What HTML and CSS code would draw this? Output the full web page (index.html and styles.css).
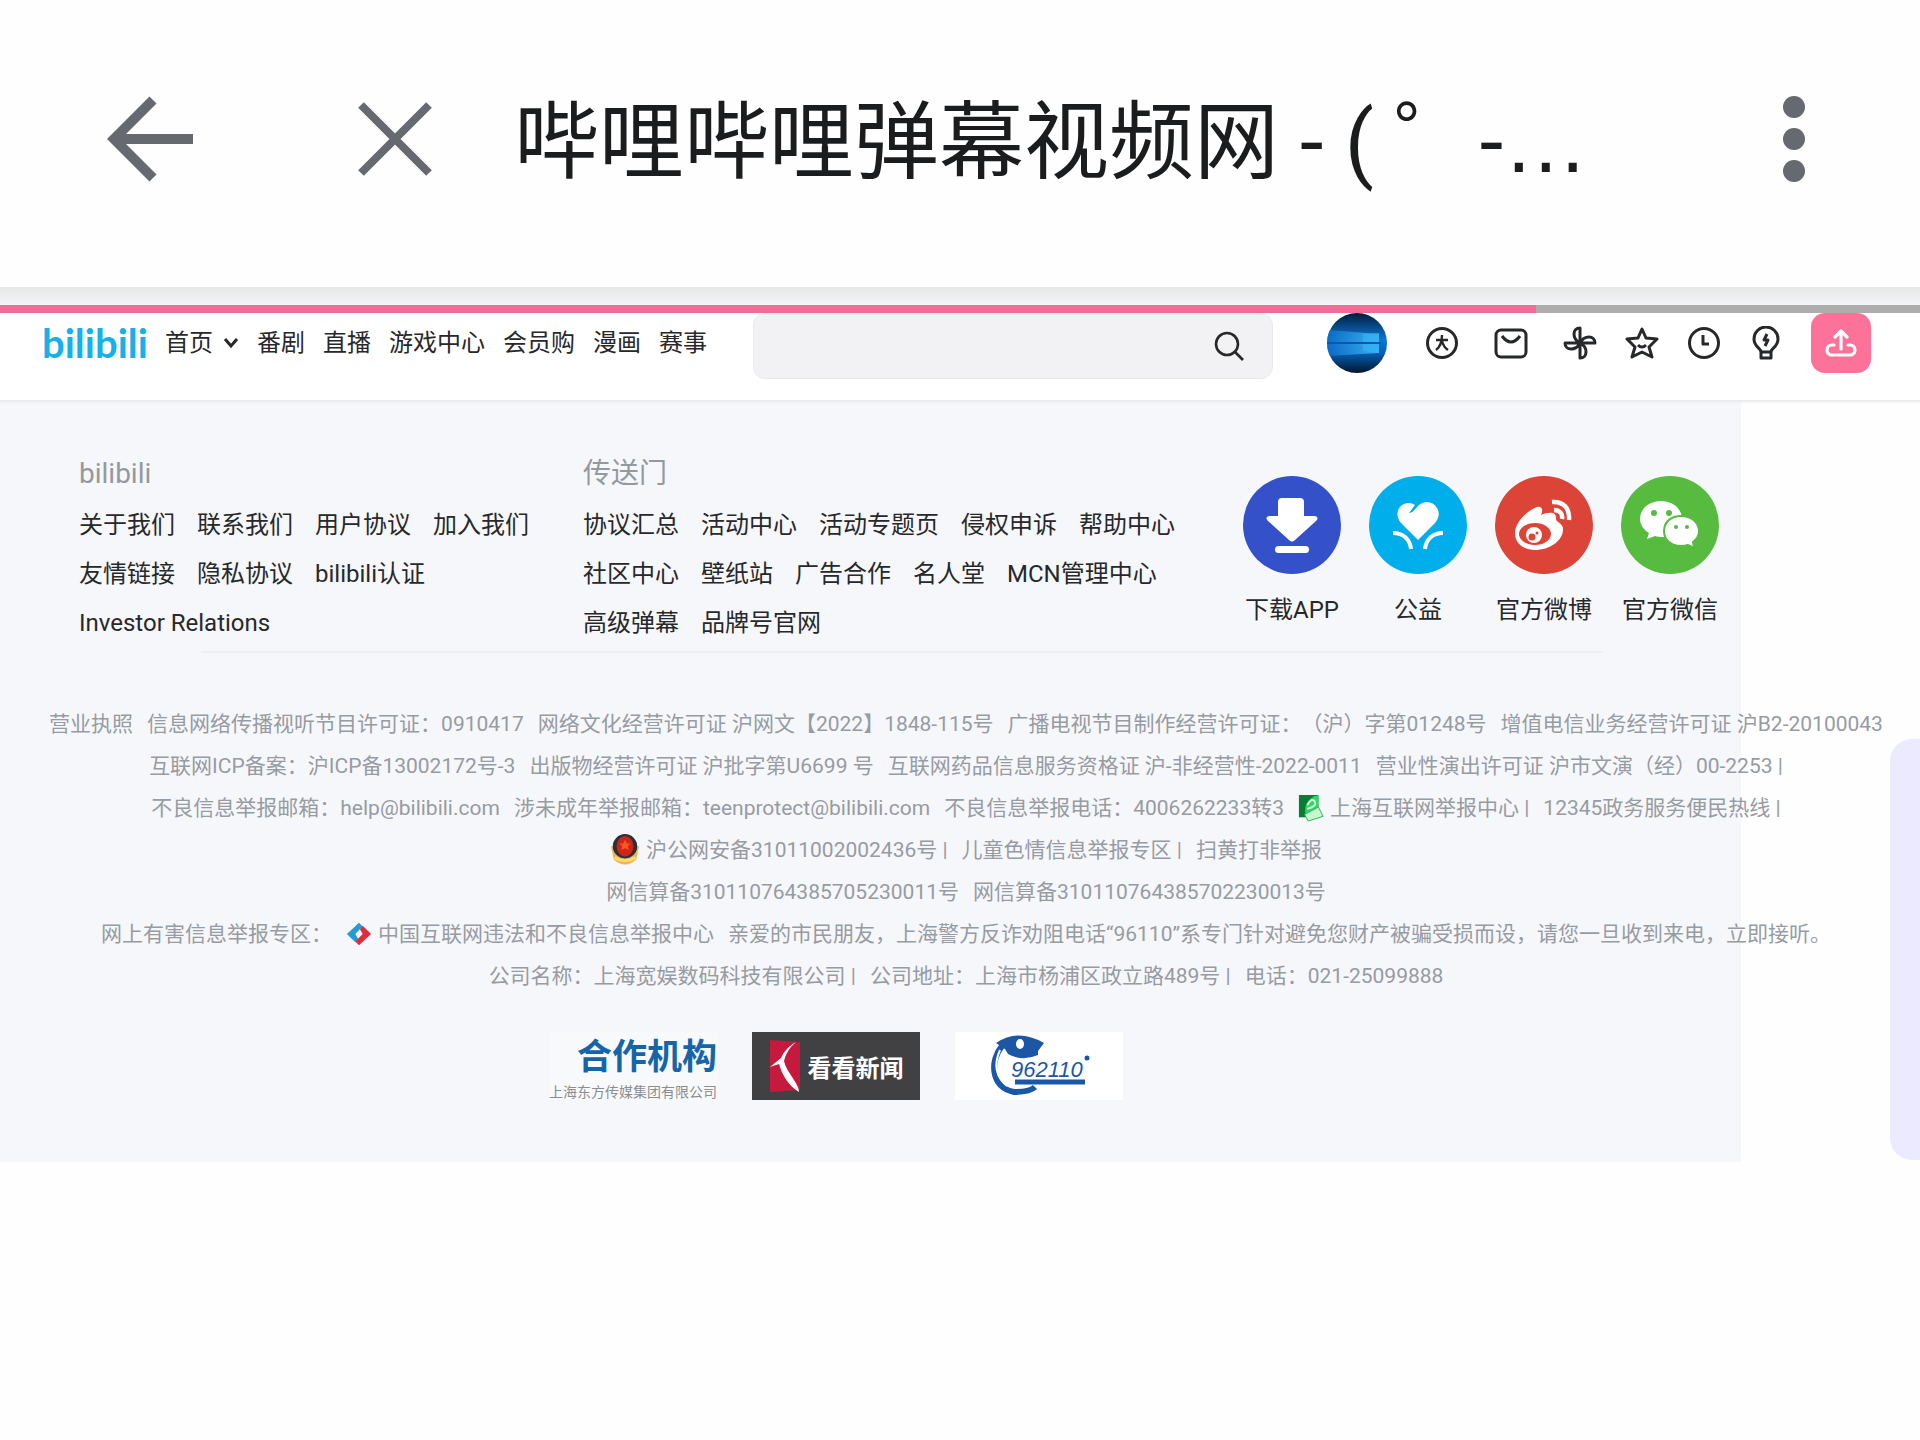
FILE: index.html
```html
<!DOCTYPE html>
<html lang="zh-CN">
<head>
  <meta charset="UTF-8" />
  <meta name="viewport" content="width=device-width, initial-scale=1.0"/>
  <title>哔哩哔哩弹幕视频网</title>
  <link rel="stylesheet" href="styles.css">
</head>
<body>

  <header class="app-bar">
    <button class="icon-btn back" aria-label="返回">
      <svg width="86" height="86" viewBox="0 0 86 86" fill="none" stroke="currentColor" stroke-width="10"><path d="M86 43H8M46 4L7 43l39 39"/></svg>
    </button>
    <button class="icon-btn close" aria-label="关闭">
      <svg width="76" height="76" viewBox="0 0 76 76" fill="none" stroke="currentColor" stroke-width="8"><path d="M4 4l68 68M72 4L4 72"/></svg>
    </button>
    <h1>哔哩哔哩弹幕视频网 - ( ゜-<span class="dots">…</span></h1>
    <button class="icon-btn more" aria-label="更多">
      <svg width="24" height="88" viewBox="0 0 24 88" fill="currentColor"><circle cx="12" cy="12" r="11"/><circle cx="12" cy="44" r="11"/><circle cx="12" cy="76" r="11"/></svg>
    </button>
  </header>
  <div class="bar-shadow"></div>
  <div class="loading"><div class="loaded"></div></div>

  <nav class="site-nav">
    <a class="logo" href="#">bilibili</a>
    <div class="nav-links">
      <a class="home" href="#">首页
        <svg width="16" height="12" viewBox="0 0 16 12" fill="none" stroke="currentColor" stroke-width="3"><path d="M2 2l6 7 6-7"/></svg>
      </a>
      <a href="#">番剧</a>
      <a href="#">直播</a>
      <a href="#">游戏中心</a>
      <a href="#">会员购</a>
      <a href="#">漫画</a>
      <a href="#">赛事</a>
    </div>
    <form class="search">
      <input type="text" aria-label="搜索">
      <button type="button" aria-label="搜索">
        <svg width="30" height="30" viewBox="0 0 30 30" fill="none" stroke="currentColor" stroke-width="2.6"><circle cx="13" cy="13" r="11"/><path d="M21 21l8 8"/></svg>
      </button>
    </form>
    <div class="user-links">
      <a class="avatar" href="#" aria-label="头像">
        <svg width="60" height="60" viewBox="0 0 60 60">
          <defs>
            <clipPath id="round"><circle cx="30" cy="30" r="30"/></clipPath>
            <linearGradient id="night" x1="0" y1="0" x2="0" y2="1"><stop offset="0" stop-color="#041b3c"/><stop offset=".45" stop-color="#0a78d4"/><stop offset=".65" stop-color="#0762b8"/><stop offset="1" stop-color="#03142f"/></linearGradient>
            <linearGradient id="beam"><stop offset="0" stop-color="#0a6cc8"/><stop offset="1" stop-color="#48c0fb"/></linearGradient>
          </defs>
          <g clip-path="url(#round)">
            <rect width="60" height="60" fill="url(#night)"/>
            <path d="M0 17l52 4v19L0 43z" fill="url(#beam)" opacity=".8"/>
            <path d="M36 21l16-1v9H36zM36 31h16v9l-16-2z" fill="#35b1f7" opacity=".7"/>
            <path d="M0 30h54" stroke="#075aa8" stroke-width="2"/>
          </g>
        </svg>
      </a>
      <a class="wide" href="#" aria-label="大会员">
        <svg class="line" width="34" height="34" viewBox="0 0 34 34"><circle cx="17" cy="17" r="14.5"/><path d="M11 14h12M17 9c0 7-2 12-6 15M17 15c1 4 3 7 6 9" stroke-width="2.4"/></svg>
      </a>
      <a class="wide" href="#" aria-label="消息">
        <svg class="line" width="34" height="34" viewBox="0 0 34 34"><rect x="2" y="4" width="30" height="27" rx="5"/><path d="M8 10q9 12 18 0"/></svg>
      </a>
      <a href="#" aria-label="动态">
        <svg class="line" width="34" height="34" viewBox="0 0 34 34"><path d="M17 17V2c-8 0-8 11 0 15zM17 17h15c0-8-11-8-15 0zM17 17v15c8 0 8-11 0-15zM17 17H2c0 8 11 8 15 0z"/></svg>
      </a>
      <a href="#" aria-label="收藏">
        <svg class="line" width="34" height="34" viewBox="0 0 34 34"><path d="M17 3l4 9 11 1-8 8 3 10-10-5-10 5 3-10-8-8 11-1z"/><path d="M13 19q4 4 8 0"/></svg>
      </a>
      <a href="#" aria-label="历史">
        <svg class="line" width="34" height="34" viewBox="0 0 34 34"><circle cx="17" cy="17" r="14.5"/><path d="M16 9v9h6"/></svg>
      </a>
      <a href="#" aria-label="创作中心">
        <svg class="line" width="34" height="34" viewBox="0 0 34 34"><path d="M12 26c0-4-7-5-7-13a12 12 0 0 1 24 0c0 8-7 9-7 13zM12 26v6h10v-6"/><path d="M18 8l-3 6h4l-3 6"/></svg>
      </a>
      <button class="upload" aria-label="投稿">
        <svg width="32" height="32" viewBox="0 0 32 32" fill="none" stroke="#fff" stroke-width="3.2" stroke-linecap="round" stroke-linejoin="round"><path d="M16 22V5M10 10l6-6 6 6M9 18H7a5 5 0 0 0 0 10h18a5 5 0 0 0 0-10h-2"/></svg>
      </button>
    </div>
  </nav>

  <footer class="footer">
    <div class="footer-top">
      <section class="col about">
        <h2>bilibili</h2>
        <p><a href="#">关于我们</a><a href="#">联系我们</a><a href="#">用户协议</a><a href="#">加入我们</a></p>
        <p><a href="#">友情链接</a><a href="#">隐私协议</a><a href="#">bilibili认证</a></p>
        <p><a href="#">Investor Relations</a></p>
      </section>
      <section class="col portal">
        <h2>传送门</h2>
        <p><a href="#">协议汇总</a><a href="#">活动中心</a><a href="#">活动专题页</a><a href="#">侵权申诉</a><a href="#">帮助中心</a></p>
        <p><a href="#">社区中心</a><a href="#">壁纸站</a><a href="#">广告合作</a><a href="#">名人堂</a><a href="#">MCN管理中心</a></p>
        <p><a href="#">高级弹幕</a><a href="#">品牌号官网</a></p>
      </section>
      <section class="socials">
        <a href="#">
          <svg width="98" height="98" viewBox="0 0 98 98"><circle cx="49" cy="49" r="49" fill="#3551c9"/><path d="M39 22h18q4 0 4 4v14h10q6 1 2 5L52 64q-3 3-6 0L25 45q-4-4 2-5h8V26q0-4 4-4z" fill="#fff"/><rect x="32" y="70" width="34" height="7" rx="3.500" fill="#fff"/></svg>
          <span>下载APP</span>
        </a>
        <a href="#">
          <svg width="98" height="98" viewBox="0 0 98 98"><circle cx="49" cy="49" r="49" fill="#00aeec"/><path d="M49 64L32 47c-6-7-4-16 3-19 4-2 8-1 11 1l-6 8c4 0 6-4 9-7 6-6 15-5 19 2 3 5 2 10-2 15z" fill="#fff"/><path d="M24 57c10 0 17 6 18 16M74 57c-10 0-17 6-18 16" fill="none" stroke="#fff" stroke-width="4"/></svg>
          <span>公益</span>
        </a>
        <a href="#">
          <svg width="98" height="98" viewBox="0 0 98 98"><circle cx="49" cy="49" r="49" fill="#db4437"/><path d="M20 57c0-11 13-23 22-26 6-1 6 4 4 8 7-3 16-4 15 4 0 3 6 4 7 9 1 12-13 22-28 22-12 0-20-7-20-17z" fill="#fff"/><ellipse cx="40" cy="58" rx="16" ry="11" fill="#db4437"/><circle cx="39" cy="59" r="8" fill="#fff"/><circle cx="37" cy="61" r="3.500" fill="#db4437"/><circle cx="42" cy="57" r="1.500" fill="#db4437"/><path d="M57 26c11-1 18 6 17 18M59 34c6 0 9 4 8 9" fill="none" stroke="#fff" stroke-width="4.500"/></svg>
          <span>官方微博</span>
        </a>
        <a href="#">
          <svg width="98" height="98" viewBox="0 0 98 98"><circle cx="49" cy="49" r="49" fill="#57bb40"/><path d="M40 25c12 0 21 8 21 18S52 61 40 61q-3 0-6-1l-8 3 2-6c-5-3-9-8-9-14 0-10 9-18 21-18z" fill="#fff"/><path d="M60 40c10 0 18 6 18 15 0 4-2 8-6 11l1 6-6-3q-3 1-7 1c-10 0-17-6-17-15s7-15 17-15z" fill="#fff" stroke="#57bb40" stroke-width="2"/><g fill="#57bb40"><circle cx="33" cy="37" r="3"/><circle cx="48" cy="37" r="3"/><circle cx="55" cy="51" r="2"/><circle cx="66" cy="51" r="2"/></g></svg>
          <span>官方微信</span>
        </a>
      </section>
    </div>
    <hr>

    <div class="copyright">
      <p><a href="#">营业执照</a><a href="#">信息网络传播视听节目许可证：0910417</a><a href="#">网络文化经营许可证 沪网文【2022】1848-115号</a><a href="#">广播电视节目制作经营许可证：（沪）字第01248号</a><a href="#">增值电信业务经营许可证 沪B2-20100043</a></p>
      <p><a href="#">互联网ICP备案：沪ICP备13002172号-3</a><a href="#">出版物经营许可证 沪批字第U6699 号</a><a href="#">互联网药品信息服务资格证 沪-非经营性-2022-0011</a><a href="#">营业性演出许可证 沪市文演（经）00-2253 |</a></p>
      <p><span>不良信息举报邮箱：help@bilibili.com</span><span>涉未成年举报邮箱：teenprotect@bilibili.com</span><span>不良信息举报电话：4006262233转3</span><a class="with-icon" href="#"><svg width="26" height="30" viewBox="0 0 28 30"><path d="M1 1h21v24H1z" fill="#087d34"/><path d="M22 1v12L9 25C5 14 10 4 22 1z" fill="#32d667"/><path d="M10 12q5-9 8-4t-8 8" fill="none" stroke="#d9ffe2" stroke-width="2"/><path d="M7 22l15-8 5 10-16 5z" fill="#c9f5d3" stroke="#20b44f"/></svg>上海互联网举报中心 |</a><a href="#">12345政务服务便民热线 |</a></p>
      <p><a class="with-icon" href="#"><svg width="30" height="34" viewBox="0 0 32 34"><path d="M1 13l3 14q12 11 24 0l3-14z" fill="#eeb64d"/><ellipse cx="16" cy="13" rx="13" ry="13" fill="#28303f"/><ellipse cx="16" cy="13" rx="9" ry="11" fill="#cf2519"/><path d="M16 6l2 4h4l-3 3 1 4-4-2-4 2 1-4-3-3h4z" fill="#f4581e"/><path d="M5 25q11 7 22 0" fill="none" stroke="#f9db78" stroke-width="3"/></svg>沪公网安备31011002002436号 |</a><a href="#">儿童色情信息举报专区 |</a><a href="#">扫黄打非举报</a></p>
      <p><a href="#">网信算备310110764385705230011号</a><a href="#">网信算备310110764385702230013号</a></p>
      <p><span>网上有害信息举报专区： </span><a class="with-icon" href="#"><svg width="26" height="26" viewBox="0 0 28 26"><path d="M14 1l4 4-8 8 3 5-3 4L1 13z" fill="#249bd7"/><path d="M18 4l9 9-13 12-4-4 8-8-3-5z" fill="#e02d3c"/></svg>中国互联网违法和不良信息举报中心</a><span>亲爱的市民朋友，上海警方反诈劝阻电话“96110”系专门针对避免您财产被骗受损而设，请您一旦收到来电，立即接听。</span></p>
      <p><span>公司名称：上海宽娱数码科技有限公司 |</span><span>公司地址：上海市杨浦区政立路489号 |</span><span>电话：021-25099888</span></p>
    </div>

    <div class="partners">
      <a class="partner smg" href="#"><strong>合作机构</strong><small>上海东方传媒集团有限公司</small></a>
      <a class="partner news" href="#">
        <svg width="32" height="52" viewBox="0 0 32 52"><path d="M1 0l30 2v48L1 52z" fill="#c5193d"/><path d="M27 2C20 6 15 11 12 18L1 27l9-3c3 11 10 22 20 28 0-9-13-20-15-31 2-8 6-14 12-19z" fill="#fff"/></svg>
        看看新闻
      </a>
      <a class="partner police" href="#">
        <svg width="168" height="68" viewBox="0 0 168 68"><path d="M47 14C35 28 35 55 59 60c10 0 17-1 21-5" fill="none" stroke="#1b57a5" stroke-width="6"/><path d="M45 18c-7 16-3 28 7 36" fill="none" stroke="#fff" stroke-width="2"/><path d="M41 11q22-15 48 0l-6 8v4q-16 7-30-1l-3-5z" fill="#1b57a5"/><ellipse cx="65" cy="12" rx="4" ry="5" fill="#fff"/><text x="56" y="45" font-size="22" font-style="italic">962110</text><path d="M60 50h70" stroke="#1b57a5" stroke-width="5"/><circle cx="132" cy="26" r="2.500" fill="#1b57a5"/></svg>
      </a>
    </div>
  </footer>

  <aside class="side-panel"></aside>

</body>
</html>
```
FILE: styles.css
```css
* {
  box-sizing: border-box;
}

body {
  margin: 0;
  font-family: Roboto, "Noto Sans CJK SC", sans-serif;
  text-spacing-trim: space-all;
  background: #fefefe;
  color: #27282a;
  min-height: 100vh;
  overflow-x: hidden;
}

a {
  color: inherit;
  text-decoration: none;
  white-space: nowrap;
}

button {
  border: none;
  background: none;
  padding: 0;
  color: inherit;
  cursor: pointer;
}

svg {
  display: block;
  flex: none;
}

.app-bar {
  display: flex;
  align-items: center;
  height: 287px;
  padding: 0 114px 10px 107px;
}

.icon-btn {
  color: #666970;
}

.close {
  margin-left: 164px;
}

.app-bar h1 {
  flex: 1;
  margin: 0 0 0 81px;
  padding-top: 8px;
  font-size: 85px;
  font-weight: 400;
  line-height: 120px;
  color: #1b1c1d;
  white-space: nowrap;
  overflow: hidden;
}

.dots {
  font-family: "Liberation Sans", sans-serif;
}

.bar-shadow {
  height: 18px;
  background: linear-gradient(#e5e8e6, #f5f5f7);
}

.loading {
  height: 8px;
  background: #adadad;
}

.loaded {
  width: 80%;
  height: 100%;
  background: #ed6d97;
}

.site-nav {
  display: flex;
  align-items: flex-start;
  height: 87px;
  padding: 0 49px 0 42px;
  background: #fff;
}

.logo {
  width: 107px;
  font-family: Lato, sans-serif;
  font-size: 40px;
  font-weight: 700;
  line-height: 60px;
  color: #17b0e8;
}

.nav-links {
  display: flex;
  gap: 18px;
  margin-left: 16px;
  font-size: 24px;
  line-height: 60px;
}

.home {
  display: flex;
  align-items: center;
  gap: 10px;
}

.search {
  display: flex;
  align-items: center;
  flex: 1;
  height: 66px;
  margin: 0 54px 0 46px;
  padding: 0 28px 0 16px;
  border: 1px solid #e9eaeb;
  border-radius: 12px;
  background: #f2f2f4;
}

.search input {
  flex: 1;
  min-width: 0;
  border: none;
  outline: none;
  background: transparent;
  font-size: 24px;
}

.user-links {
  display: flex;
  align-items: center;
  gap: 28px;
  height: 60px;
}

.avatar {
  margin-right: 10px;
}

.wide {
  margin-right: 7px;
}

.line {
  fill: none;
  stroke: currentColor;
  stroke-width: 3;
  stroke-linejoin: round;
}

.upload {
  display: flex;
  align-items: center;
  justify-content: center;
  width: 60px;
  height: 60px;
  border-radius: 14px;
  background: #fd7299;
}

.footer {
  padding-bottom: 62px;
  background:
    linear-gradient(#e8e8ea, transparent) no-repeat 0 0 / 100% 4px,
    linear-gradient(#f6f7fa, #f6f7fa) no-repeat 0 0 / 90.7% 100%;
}

.footer-top {
  display: flex;
  padding: 53px 0 0 79px;
}

.about {
  width: 504px;
}

.portal {
  width: 660px;
}

.col h2 {
  margin: 0 0 6px;
  font-size: 28px;
  font-weight: 400;
  line-height: 42px;
  color: #9499a0;
}

.col p {
  display: flex;
  gap: 22px;
  margin: 0;
  font-size: 24px;
  line-height: 49px;
}

.socials {
  display: flex;
  gap: 28px;
  padding-top: 23px;
}

.socials a {
  display: flex;
  flex-direction: column;
  align-items: center;
  width: 98px;
  font-size: 24px;
  line-height: 36px;
}

.socials span {
  margin-top: 18px;
}

hr {
  width: 73%;
  height: 2px;
  margin: 3px 0 0 201px;
  border: none;
  background: #eef0f2;
}

.copyright {
  padding: 50px 0 0 12px;
  font-size: 21px;
  line-height: 42px;
  color: #979ba2;
}

.copyright p {
  display: flex;
  justify-content: center;
  gap: 14px;
  margin: 0;
  white-space: nowrap;
}

.with-icon {
  display: flex;
  align-items: center;
  gap: 6px;
}

.partners {
  display: flex;
  gap: 35px;
  padding: 35px 0 0 549px;
}

.partner {
  display: flex;
  align-items: center;
  width: 168px;
  height: 68px;
}

.smg {
  flex-direction: column;
  align-items: flex-end;
  background: #f8f9fa;
}

.smg strong {
  font-size: 35px;
  line-height: 52px;
  color: #1565a7;
}

.smg small {
  font-size: 14px;
  line-height: 16px;
  color: #8d8d8f;
}

.news {
  justify-content: center;
  gap: 7px;
  background: #414143;
  color: #fff;
  font-size: 24px;
  font-weight: 700;
}

.police {
  background: #fff;
}

.police text {
  font-family: "Liberation Sans", sans-serif;
  fill: #1b57a5;
}

/* drawer handle that floats over the page edge */
.side-panel {
  position: absolute;
  top: 739px;
  right: 0;
  width: 30px;
  height: 421px;
  border-radius: 22px 0 0 22px;
  background: #ebeafe;
}
```
